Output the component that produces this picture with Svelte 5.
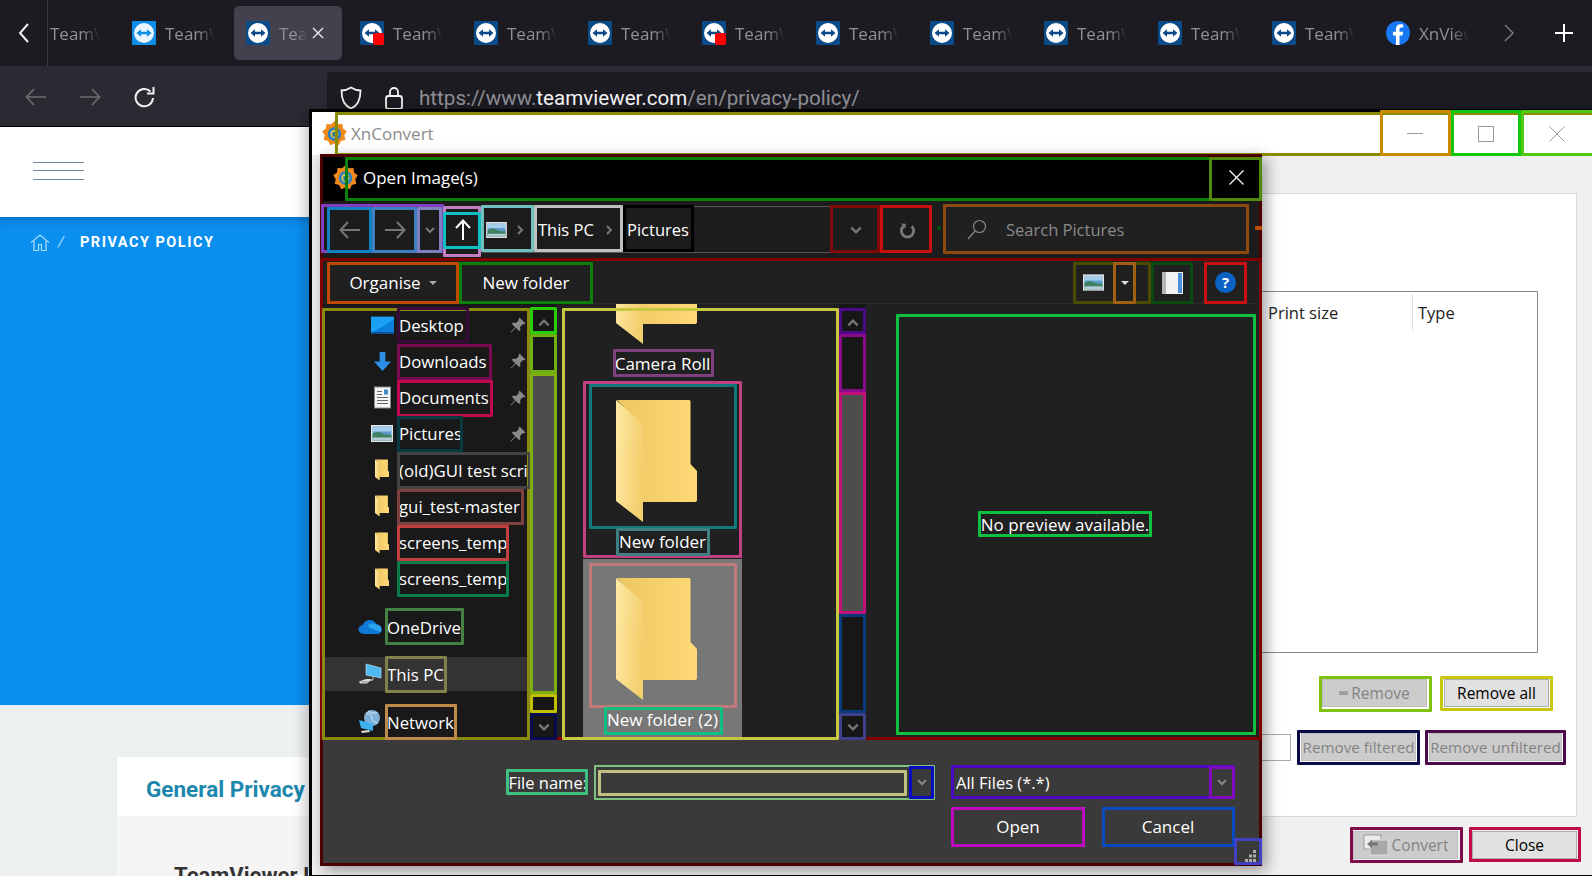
<script>
  const tabs = [
    { kind: 'light' },
    { kind: 'tv', active: true },
    { kind: 'tv', badge: true },
    { kind: 'tv' },
    { kind: 'tv' },
    { kind: 'tv', badge: true },
    { kind: 'tv' },
    { kind: 'tv' },
    { kind: 'tv' },
    { kind: 'tv' },
    { kind: 'tv' },
    { kind: 'fb', label: 'XnViewer' },
  ];

  const quick = [
    { icon: 'desktop', label: 'Desktop', pin: true },
    { icon: 'down', label: 'Downloads', pin: true },
    { icon: 'doc', label: 'Documents', pin: true },
    { icon: 'pic', label: 'Pictures', pin: true },
    { icon: 'folder', label: '(old)GUI test script' },
    { icon: 'folder', label: 'gui_test-master' },
    { icon: 'folder', label: 'screens_temp' },
    { icon: 'folder', label: 'screens_temp' },
  ];

  const files = [
    { label: 'Camera Roll' },
    { label: 'New folder' },
    { label: 'New folder (2)', selected: true },
  ];

  // detected-widget boxes drawn over the screenshot: x1, y1, x2, y2, colour, stroke
  const boxes = [
    [335, 112, 1600, 156, '#8a8a00'], [1380, 110, 1451, 156, '#c88a00'], [1451, 110, 1521, 156, '#10c810'], [1521, 110, 1600, 156, '#50c810'],
    [320, 154, 1262, 866, '#4a0000'], [320, 258, 1262, 740, '#800000'],
    [345, 157, 1262, 201, '#0a800a'], [1209, 157, 1262, 201, '#508a0a'],
    [321, 204, 444, 253, '#8040c0'], [327, 207, 372, 253, '#1080c0'], [372, 207, 417, 253, '#4080c0'], [417, 207, 442, 253, '#8080c0'],
    [443, 206, 481, 257, '#c080c0'], [443, 212, 481, 249, '#10c0c0'], [481, 205, 534, 252, '#70c0c0'], [534, 205, 623, 252, '#c0c0c0'], [623, 205, 694, 252, '#000000'],
    [830, 205, 880, 253, '#800a0a'], [880, 205, 932, 253, '#c81010'], [943, 204, 1249, 254, '#8a4a10'],
    [327, 262, 459, 304, '#c04a00'], [459, 262, 593, 304, '#0a800a'], [1073, 262, 1151, 304, '#4a4a00'], [1113, 262, 1136, 304, '#a06010'], [1151, 262, 1193, 304, '#0a4a10'], [1204, 262, 1247, 304, '#c81010'],
    [322, 308, 530, 740, '#8a8a10'],
    [397, 307, 469, 343, '#3a0a3a'], [397, 344, 492, 380, '#7a0a50'], [397, 380, 493, 417, '#c00a50'], [397, 416, 463, 452, '#0a3a40'], [397, 452, 531, 489, '#444444'],
    [397, 489, 524, 525, '#7f4040'], [397, 525, 509, 561, '#c04040'], [397, 561, 509, 597, '#0a7a4a'], [385, 608, 464, 645, '#458045'], [385, 656, 447, 693, '#80804a'], [385, 704, 457, 740, '#c08a4a'],
    [530, 307, 557, 334, '#2acc0a'], [530, 334, 557, 373, '#70b010'], [530, 373, 557, 694, '#80b010'], [530, 694, 557, 713, '#c0c000'], [530, 713, 557, 740, '#0a0a50'],
    [562, 308, 839, 740, '#c8c840'],
    [839, 308, 866, 334, '#4a0a8a'], [839, 334, 866, 392, '#8a0a8a'], [839, 392, 866, 614, '#c0107a'], [839, 614, 866, 713, '#0a3a7a'], [839, 713, 866, 740, '#40408a'],
    [613, 349, 714, 377, '#804080'], [583, 381, 742, 558, '#c04080'], [589, 384, 737, 529, '#107a7a'], [616, 528, 710, 556, '#408080'], [589, 563, 737, 708, '#c07a7a'], [604, 707, 723, 735, '#10c080'],
    [896, 314, 1256, 735, '#10c040'], [978, 511, 1152, 537, '#10c040'],
    [506, 769, 588, 795, '#40c080'], [594, 765, 935, 800, '#80c080', 2], [598, 770, 907, 796, '#c0c080'], [909, 766, 934, 799, '#0a0ac0'],
    [951, 765, 1235, 799, '#4a0ac0'], [1209, 766, 1235, 799, '#800ac0'], [951, 807, 1085, 847, '#c00ac0'], [1102, 807, 1235, 847, '#0a4ac0'], [1234, 838, 1262, 865, '#4040c0'],
    [1319, 676, 1432, 712, '#80c010'], [1440, 676, 1553, 711, '#c8c810'], [1297, 730, 1420, 765, '#0a0a4a'], [1425, 730, 1566, 765, '#4a0a4a'], [1350, 827, 1463, 863, '#800a4a'], [1469, 827, 1581, 862, '#c00a4a'],
    [1255, 226, 1262, 230, '#c04a00', 2], [937, 226, 941, 230, '#0a500a', 2],
  ];

  // star outline for the XnConvert flame
  const flame = Array.from({ length: 18 }, (_, i) => {
    const r = i % 2 ? 9.5 : 12;
    const a = (i / 18) * Math.PI * 2;
    return `${(12 + r * Math.sin(a)).toFixed(1)},${(12 - r * Math.cos(a)).toFixed(1)}`;
  }).join(' ');
</script>

{#snippet chevron(dir, color, size = 12)}
  <svg width={size} height={size} viewBox="0 0 12 12" class="ico">
    {#if dir === 'down'}
      <path d="M2 4l4 4 4-4" fill="none" stroke={color} stroke-width="2" />
    {:else if dir === 'up'}
      <path d="M2 8l4-4 4 4" fill="none" stroke={color} stroke-width="2" />
    {:else}
      <path d="M4 2l4 4-4 4" fill="none" stroke={color} stroke-width="2" />
    {/if}
  </svg>
{/snippet}

{#snippet tvIcon(kind, badge)}
  <svg width="24" height="24" viewBox="0 0 24 24" class="ico">
    <rect width="24" height="24" rx="1" fill={kind === 'light' ? '#0e8ee9' : '#0a4a86'} />
    <circle cx="12" cy="12" r="10" fill={kind === 'light' ? '#e8f4fd' : '#fff'} />
    <path d="M4.500 12l4.500-3.800v2.500h6V8.200l4.500 3.800-4.500 3.800v-2.500H9v2.500z" fill={kind === 'light' ? '#0e8ee9' : '#0a4a86'} />
    {#if badge}<rect x="13" y="12" width="11" height="12" rx="2" fill="#f00" />{/if}
  </svg>
{/snippet}

{#snippet flameIcon()}
  <svg width="25" height="25" viewBox="0 0 24 24" class="ico">
    <polygon points={flame} fill="#f08a1a" />
    <circle cx="12" cy="12.500" r="6.500" fill="#2b7fc4" />
    <circle cx="12" cy="12.500" r="3.800" fill="#e8d24a" />
    <path d="M10 10.500h5v1.800h-3v1h3v1.800h-5z" fill="#2c6f9f" />
  </svg>
{/snippet}

{#snippet landscape(w, h)}
  <svg width={w} height={h} viewBox="0 0 22 17" class="ico">
    <rect width="22" height="17" fill="#e6e6e6" />
    <rect x="1.500" y="1.500" width="19" height="14" fill="#5b9bd0" />
    <rect x="1.500" y="1.500" width="19" height="5" fill="#a5cdea" />
    <path d="M1.500 9q5-3.500 9-1t10 1.500v6h-19z" fill="#3f8060" />
    <rect x="1.500" y="12.500" width="19" height="3" fill="#b5cbd6" />
  </svg>
{/snippet}

{#snippet folderIcon(w, h)}
  <svg width={w} height={h} viewBox="0 0 81 122" class="ico">
    <defs>
      <linearGradient id="fb" x1="0" x2="1" y1="0" y2="0">
        <stop offset="0" stop-color="#eec660" />
        <stop offset="1" stop-color="#ffd977" />
      </linearGradient>
      <linearGradient id="ff" x1="0" x2="1" y1="0" y2="0.200">
        <stop offset="0" stop-color="#ffe9a4" />
        <stop offset="1" stop-color="#f3cf6e" />
      </linearGradient>
    </defs>
    <path d="M1 0H73q1.500 0 1.500 1.500V64L81 71V100q0 2-2 2H24V24z" fill="url(#fb)" />
    <path d="M0 0L27 24V122L0 101z" fill="url(#ff)" />
  </svg>
{/snippet}

{#snippet treeIcon(name)}
  {#if name === 'desktop'}
    <svg width="23" height="18" viewBox="0 0 22 16" class="ico">
      <rect width="22" height="16" fill="#19a0f5" />
      <path d="M0 16L22 3v13z" fill="#0c7fdc" />
      <rect y="14.800" width="22" height="1.200" fill="#0a4f96" />
    </svg>
  {:else if name === 'down'}
    <svg width="19" height="21" viewBox="0 0 20 20" class="ico">
      <path d="M7 0h6v10h6L10 20 1 10h6z" fill="#2e8fe6" />
    </svg>
  {:else if name === 'doc'}
    <svg width="17" height="23" viewBox="0 0 17 22" class="ico">
      <rect x="0.500" y="0.500" width="16" height="21" fill="#f5f5f5" stroke="#8a8a8a" />
      <path d="M3 5h5M3 8h5M3 11h11M3 14h11M3 17h11" stroke="#666" />
      <rect x="10" y="3" width="4" height="5" fill="#3a8ccc" />
    </svg>
  {:else if name === 'pic'}
    {@render landscape(22, 17)}
  {:else}
    {@render folderIcon(14, 22)}
  {/if}
{/snippet}

{#snippet scrollbar(topH, thumbH, bottomH)}
  <div class="sbar">
    <div class="sbtn first">{@render chevron('up', '#777', 14)}</div>
    <div style="height: {topH}px"></div>
    <div class="sthumb" style="height: {thumbH}px"></div>
    <div style="height: {bottomH}px"></div>
    <div class="sbtn">{@render chevron('down', '#777', 14)}</div>
  </div>
{/snippet}

<div class="screen">
  <header class="tabbar">
    <div class="tab-back">
      <svg width="12" height="24" viewBox="0 0 12 24"><path d="M10 3L2 12l8 9" fill="none" stroke="#eee" stroke-width="2" /></svg>
    </div>
    <div class="tab-partial"><span class="tab-text">TeamViewer</span></div>
    {#each tabs as tab}
      <div class="tab" class:active={tab.active}>
        {#if tab.kind === 'fb'}
          <svg width="24" height="24" viewBox="0 0 24 24" class="ico">
            <circle cx="12" cy="12" r="12" fill="#1877f2" />
            <path d="M13.500 24V14.500h3l.6-3.700h-3.600V8.500c0-1.100.5-1.900 2-1.900h1.700V3.400c-.8-.1-1.700-.2-2.600-.2-2.900 0-4.700 1.700-4.700 4.800v2.800H7v3.700h2.900V24z" fill="#fff" />
          </svg>
        {:else}
          {@render tvIcon(tab.kind, tab.badge)}
        {/if}
        <span class="tab-text">{tab.label ?? 'TeamViewer'}</span>
        {#if tab.active}
          <svg width="12" height="12" viewBox="0 0 12 12" class="tab-x"><path d="M1 1l10 10M11 1L1 11" stroke="#eee" stroke-width="1.300" /></svg>
        {/if}
      </div>
    {/each}
    <div class="tab-end">
      <svg width="12" height="18" viewBox="0 0 12 18"><path d="M2 1l8 8-8 8" fill="none" stroke="#777" stroke-width="1.500" /></svg>
      <svg width="18" height="18" viewBox="0 0 18 18"><path d="M9 0v18M0 9h18" stroke="#fff" stroke-width="2" /></svg>
    </div>
  </header>

  <div class="toolbar">
    <svg width="22" height="18" viewBox="0 0 22 18"><path d="M21 9H2M9 1L1.500 9 9 17" fill="none" stroke="#6c6c70" stroke-width="1.700" /></svg>
    <svg width="22" height="18" viewBox="0 0 22 18"><path d="M1 9h19M13 1l7.500 8-7.500 8" fill="none" stroke="#6c6c70" stroke-width="1.700" /></svg>
    <svg width="22" height="22" viewBox="0 0 22 22"><path d="M17.500 5.500A8.700 8.700 0 1 0 20 12" fill="none" stroke="#f2f2f2" stroke-width="2" /><path d="M20.500 1v6.500H14" fill="none" stroke="#f2f2f2" stroke-width="2" /></svg>
    <div class="urlbar">
      <svg width="22" height="24" viewBox="0 0 22 24"><path d="M11 1.500c3 2 6 3 9.500 3C20.500 14 17 20 11 22.500 5 20 1.500 14 1.500 4.500c3.500 0 6.500-1 9.500-3z" fill="none" stroke="#f2f2f2" stroke-width="1.800" /></svg>
      <svg width="18" height="24" viewBox="0 0 18 24"><rect x="1" y="10" width="16" height="13" rx="2.500" fill="none" stroke="#f2f2f2" stroke-width="1.800" /><path d="M5 10V6a4 4 0 0 1 8 0v4" fill="none" stroke="#f2f2f2" stroke-width="1.800" /></svg>
      <span class="url">https://www.<b>teamviewer.com</b>/en/privacy-policy/</span>
    </div>
  </div>

  <main class="page">
    <div class="site-nav">
      <div class="burger"><i></i><i></i><i></i></div>
    </div>
    <div class="hero">
      <div class="crumbs">
        <svg width="20" height="17" viewBox="0 0 20 17"><path d="M1 8.500L10 1l9 7.500M4 7v9.500h4.500v-6h3v6H16V7" fill="none" stroke="#a9dbff" stroke-width="1.200" /></svg>
        <span class="slash">/</span>
        <span class="crumb">PRIVACY POLICY</span>
      </div>
    </div>
    <div class="article">
      <div class="article-tab">General Privacy Policy</div>
      <div class="article-body"><h2>TeamViewer Inc</h2></div>
    </div>
  </main>

  <section class="xn">
    <div class="xn-title">
      {@render flameIcon()}
      <span>XnConvert</span>
      <div class="xn-ctrls">
        <div><svg width="16" height="2"><rect width="16" height="1" fill="#999" /></svg></div>
        <div><svg width="16" height="16"><rect x="0.500" y="0.500" width="15" height="15" fill="none" stroke="#999" /></svg></div>
        <div><svg width="16" height="16"><path d="M.5 .5l15 15M15.500 .5l-15 15" stroke="#999" /></svg></div>
      </div>
    </div>
    <div class="xn-body">
      <div class="xn-panel">
        <div class="table">
          <div class="thead">
            <span class="th-print">Print size</span>
            <span class="th-type">Type</span>
          </div>
        </div>
        <div class="btn-row one">
          <button class="btn off"><span class="minus"></span> Remove</button>
          <button class="btn">Remove all</button>
        </div>
        <div class="btn-row two">
          <div class="mini-input"></div>
          <button class="btn off w115">Remove filtered</button>
          <button class="btn off w133">Remove unfiltered</button>
        </div>
      </div>
      <div class="xn-foot">
        <button class="btn off">
          <svg width="26" height="22" viewBox="0 0 26 22" class="ico">
            <rect x="1" y="1" width="17" height="14" fill="#eee" stroke="#999" />
            <rect x="7" y="6" width="18" height="15" fill="#a9a9a9" stroke="#ddd" />
            <path d="M4 10l5-4v2.500h6v3H9V14z" fill="#777" />
          </svg>
          Convert
        </button>
        <button class="btn">Close</button>
      </div>
    </div>

    <div class="dialog">
      <div class="dlg-title">
        {@render flameIcon()}
        <span>Open Image(s)</span>
        <svg class="dlg-x" width="15" height="15" viewBox="0 0 15 15"><path d="M.5 .5l14 14M14.500 .5l-14 14" stroke="#fff" stroke-width="1.200" /></svg>
      </div>

      <div class="dlg-nav">
        <div class="navbtn w45"><svg width="22" height="18" viewBox="0 0 22 18"><path d="M21 9H2M9 1L1.500 9 9 17" fill="none" stroke="#777" stroke-width="2" /></svg></div>
        <div class="navbtn w45"><svg width="22" height="18" viewBox="0 0 22 18"><path d="M1 9h19M13 1l7.500 8-7.500 8" fill="none" stroke="#777" stroke-width="2" /></svg></div>
        <div class="navbtn w25">{@render chevron('down', '#777')}</div>
        <div class="navbtn w38"><svg width="16" height="22" viewBox="0 0 16 22"><path d="M8 21V2M1 9l7-7.500L15 9" fill="none" stroke="#fff" stroke-width="2" /></svg></div>
        <div class="crumbbar">
          <div class="crumbpart first">{@render landscape(21, 16)} {@render chevron('right', '#777', 12)}</div>
          <div class="crumbpart pc">This PC {@render chevron('right', '#777', 12)}</div>
          <div class="crumbpart">Pictures</div>
        </div>
        <div class="navbtn w50">{@render chevron('down', '#777', 14)}</div>
        <div class="navbtn w52"><svg width="17" height="18" viewBox="0 0 20 22"><path d="M15 6.500A7.500 7.500 0 1 1 5 6.500" fill="none" stroke="#777" stroke-width="3.500" /><path d="M2 3l6 .5-.5 6z" fill="#777" /></svg></div>
        <div class="searchbox">
          <svg width="20" height="21" viewBox="0 0 20 21" class="ico"><circle cx="12.500" cy="7.500" r="6" fill="none" stroke="#888" stroke-width="1.200" /><path d="M8 12L1 20" stroke="#888" stroke-width="1.200" /></svg>
          <span>Search Pictures</span>
        </div>
      </div>

      <div class="dlg-tools">
        <div class="tool w132">Organise <span class="caret"></span></div>
        <div class="tool w134">New folder</div>
        <div class="tools-right">
          <div class="tool w40">{@render landscape(21, 17)}</div>
          <div class="tool w23"><span class="caret white"></span></div>
          <div class="tool w42 ml15">
            <svg width="21" height="22" viewBox="0 0 21 22"><rect width="21" height="22" fill="#f2f2f2" /><rect x="16" y="1" width="4" height="20" fill="#4a90d9" /><rect x="0" y="0" width="4" height="22" fill="#b5b5b5" /></svg>
          </div>
          <div class="tool w43 ml11">
            <span class="helpdot">?</span>
          </div>
        </div>
      </div>

      <div class="dlg-main">
        <div class="tree">
          {#each quick as row}
            <div class="qrow">
              <div class="qicon">{@render treeIcon(row.icon)}</div>
              <span class="qlabel">{row.label}</span>
              {#if row.pin}
                <svg class="pin" width="16" height="16" viewBox="0 0 16 16"><path d="M9.500 .5L15.500 6.500 14 7.500 13 7 10 10 10.500 13 9 14 5.800 10.800 1 15.500 .5 15 5.200 10.200 2 7 3 5.500 6 6 9 3 8.500 2z" fill="#8a8a8a" /></svg>
              {/if}
            </div>
          {/each}
          <div class="rrow onedrive">
            <svg width="24" height="17" viewBox="0 0 24 17" class="ico">
              <path d="M6 15q-5.500-.5-5.500-4.500 0-3.500 4-4.500Q7 1 12 1q4.500 0 6.500 4.500 5 .5 5 5 0 4.500-4.500 4.500z" fill="#0f78d4" />
              <path d="M10 6q4-2.500 8.500-.5 5 .5 5 5 0 1.500-.7 2.500L12 9z" fill="#2aa4ec" />
            </svg>
            <span>OneDrive</span>
          </div>
          <div class="rrow thispc">
            <svg width="24" height="22" viewBox="0 0 24 22" class="ico">
              <path d="M8 1l15 4v10L8 12z" fill="#4fb9f2" stroke="#cfe9f8" stroke-width=".6" />
              <path d="M15 14v3l-4 .5" fill="none" stroke="#bbb" />
              <path d="M1 18.500l7-2.500h6l-5 4.500H2z" fill="#d8d8d8" />
              <path d="M3 18.500h7M4 19.700h5" stroke="#999" stroke-width=".6" />
            </svg>
            <span>This PC</span>
          </div>
          <div class="rrow network">
            <svg width="24" height="24" viewBox="0 0 24 24" class="ico">
              <circle cx="14" cy="8" r="8" fill="#7fb1d8" />
              <path d="M8 3q6 1 6 5t6 5M10 1q3 3 9 2" fill="none" stroke="#cfe3f2" />
              <path d="M1 10l14 4v7L3 18z" fill="#3fb0ee" />
              <path d="M3 21l8-1 1 2-8 1z" fill="#ddd" />
            </svg>
            <span>Network</span>
          </div>
        </div>
        {@render scrollbar(39, 321, 19)}

        <div class="filelist">
          <div class="filescroll">
            {#each files as f}
              <div class="fileitem" class:sel={f.selected}>
                <div class="fileicon">{@render folderIcon(81, 122)}</div>
                <span class="filelabel">{f.label}</span>
              </div>
            {/each}
          </div>
        </div>
        {@render scrollbar(58, 222, 99)}

        <div class="preview">No preview available.</div>
      </div>

      <div class="dlg-foot">
        <div class="foot-row">
          <label for="fname">File name:</label>
          <div class="combo wide">
            <input id="fname" />
            <div class="combo-drop">{@render chevron('down', '#888', 12)}</div>
          </div>
          <div class="combo filter">
            <span>All Files (*.*)</span>
            <div class="combo-drop">{@render chevron('down', '#888', 12)}</div>
          </div>
        </div>
        <div class="foot-row second">
          <button class="dbtn primary">Open</button>
          <button class="dbtn">Cancel</button>
        </div>
        <svg class="grip" width="12" height="12" viewBox="0 0 12 12">
          <path d="M8 0h3v3H8zM8 4.500h3v3H8zM4 4.500h3v3H4zM8 9h3v3H8zM4 9h3v3H4zM0 9h3v3H0z" fill="#aaa" />
        </svg>
      </div>
    </div>
  </section>

  {#each boxes as [x1, y1, x2, y2, color, sw]}
    <div class="box" style="left: {x1}px; top: {y1}px; width: {x2 - x1}px; height: {y2 - y1}px; border-color: {color}; border-width: {sw ?? 3}px"></div>
  {/each}
</div>

<style>
  :global(body) {
    margin: 0;
    overflow: hidden;
    background: #fff;
  }
  .screen {
    position: relative;
    width: 1592px;
    height: 876px;
    overflow: hidden;
    font-family: "Open Sans", "Noto Sans", sans-serif;
    font-size: 16px;
  }
  .ico { display: block; flex: none; }
  .box {
    position: absolute;
    box-sizing: border-box;
    border-style: solid;
    border-radius: 1px;
    pointer-events: none;
  }

  /* browser chrome */
  .tabbar {
    display: flex;
    height: 66px;
    background: #1c1b22;
  }
  .tab-back {
    width: 47px;
    border-right: 1px solid #3a3a42;
    display: flex;
    align-items: center;
    justify-content: center;
    flex: none;
  }
  .tab-partial {
    width: 70px;
    padding-left: 2px;
    flex: none;
    display: flex;
    align-items: center;
  }
  .tab {
    box-sizing: border-box;
    width: 108px;
    height: 54px;
    margin: 6px 6px 0 0;
    padding-left: 12px;
    display: flex;
    align-items: center;
    gap: 9px;
    flex: none;
    position: relative;
    border-radius: 5px;
  }
  .tab.active { background: #42414d; }
  .tab-text {
    display: block;
    width: 50px;
    overflow: hidden;
    white-space: nowrap;
    color: #909096;
    font-size: 17px;
    -webkit-mask-image: linear-gradient(to right, #000 65%, transparent 100%);
    mask-image: linear-gradient(to right, #000 65%, transparent 100%);
  }
  .tab.active .tab-text { width: 28px; }
  .tab-x { position: absolute; left: 78px; top: 21px; }
  .tab-end {
    display: flex;
    align-items: center;
    margin-left: auto;
    gap: 40px;
    padding-right: 19px;
  }
  .toolbar {
    height: 61px;
    box-sizing: border-box;
    background: #2b2a33;
    border-bottom: 1px solid #000;
    display: flex;
    align-items: center;
    padding-left: 25px;
    gap: 32px;
  }
  .toolbar > svg { margin-top: 2px; }
  .urlbar {
    flex: 1;
    align-self: flex-end;
    height: 54px;
    margin-left: 140px;
    background: #1c1b22;
    border-radius: 4px 0 0 0;
    display: flex;
    align-items: center;
    padding: 0 0 2px 13px;
    box-sizing: border-box;
    gap: 23px;
    color: #8f8f94;
  }
  .urlbar svg { flex: none; }
  .url {
    font-size: 20.600px;
    margin-left: -7px;
    white-space: nowrap;
    font-family: Roboto, sans-serif;
  }
  .url b { color: #f4f4f4; font-weight: 400; }

  /* web page behind the window */
  .page {
    height: 749px;
    overflow: hidden;
    background: #edf0f1;
    font-family: Roboto, sans-serif;
  }
  .site-nav {
    height: 90px;
    background: #fff;
    display: flex;
    align-items: center;
    padding: 0 0 3px 33px;
    box-sizing: border-box;
  }
  .burger {
    width: 51px;
    display: flex;
    flex-direction: column;
    gap: 7.500px;
  }
  .burger i {
    display: block;
    height: 1px;
    background: #6d87a3;
  }
  .hero {
    height: 488px;
    background: #0a8fef;
    box-shadow: inset 0 8px 8px -6px rgba(0, 60, 120, 0.45);
    box-sizing: border-box;
    padding: 16px 0 0 30px;
  }
  .crumbs {
    display: flex;
    align-items: center;
    color: #fff;
  }
  .slash { margin: 0 16px 0 8px; color: #a9dbff; font-size: 15px; font-style: italic; }
  .crumb {
    font-size: 14.500px;
    font-weight: 700;
    letter-spacing: 1.500px;
  }
  .article { margin: 52px 0 0 117px; }
  .article-tab {
    height: 59px;
    box-sizing: border-box;
    background: #fff;
    padding: 16px 0 0 29px;
    color: #1b87ad;
    font-size: 22.500px;
    font-weight: 700;
    white-space: nowrap;
    line-height: 32px;
  }
  .article-body {
    background: #f5f5f5;
    height: 200px;
    padding: 47px 0 0 57px;
  }
  h2 {
    margin: 0;
    font-size: 22px;
    line-height: 26px;
    color: #333;
    white-space: nowrap;
  }

  /* XnConvert window */
  .xn {
    position: absolute;
    left: 309px;
    top: 109px;
    width: 1283px;
    height: 767px;
    box-sizing: border-box;
    border-top: 3px solid #000;
    border-left: 3px solid #000;
    border-bottom: 1px solid #000;
    background: #f0f0f0;
    box-shadow: -6px 0 10px rgba(0, 0, 0, 0.18);
  }
  .xn-title {
    height: 43px;
    background: #fff;
    display: flex;
    align-items: center;
    padding-left: 10px;
    gap: 4px;
    color: #8b8b8b;
    font-size: 17px;
  }
  .xn-ctrls {
    margin-left: auto;
    display: flex;
    height: 100%;
  }
  .xn-ctrls div {
    width: 71px;
    display: flex;
    align-items: center;
    justify-content: center;
  }
  .xn-body {
    height: 720px;
    padding: 38px 15px 0 10px;
    box-sizing: border-box;
  }
  .xn-panel {
    height: 624px;
    box-sizing: border-box;
    background: #fff;
    border: 1px solid #d9d9d9;
    padding-top: 97px;
    display: flex;
    flex-direction: column;
  }
  .table {
    height: 362px;
    box-sizing: border-box;
    margin: 0 38px 0 0;
    border: 1px solid #888;
    background: #fff;
  }
  .thead {
    display: grid;
    grid-template-columns: 1fr 149px 125px;
    height: 40px;
    align-items: center;
    color: #222;
    font-size: 16.500px;
  }
  .th-print { grid-column: 2; padding-left: 5px; }
  .th-type {
    grid-column: 3;
    border-left: 1px solid #ddd;
    padding-left: 5px;
    line-height: 37px;
  }
  .btn-row {
    display: flex;
    justify-content: flex-end;
    align-items: center;
  }
  .btn-row.one { margin: 26px 27px 0 0; gap: 17px; }
  .btn-row.two { margin: 26px 14px 0 0; gap: 13px; }
  .mini-input {
    width: 40px;
    height: 27px;
    border: 1px solid #aaa;
    box-sizing: border-box;
    margin-right: -3px;
  }
  .btn {
    box-sizing: border-box;
    width: 105px;
    height: 28px;
    padding: 0;
    border: 1px solid #adadad;
    background: #e1e1e1;
    color: #000;
    font: 15.500px "Open Sans", sans-serif;
    display: flex;
    align-items: center;
    justify-content: center;
    gap: 3px;
    white-space: nowrap;
  }
  .btn.off { background: #cccccc; border-color: #bfbfbf; color: #838383; }
  .btn.w115 { width: 115px; font-size: 15.200px; }
  .btn.w133 { width: 133px; font-size: 15.200px; }
  .minus { width: 9px; height: 4px; background: #a0a0a0; }
  .xn-foot {
    display: flex;
    justify-content: flex-end;
    gap: 14px;
    margin-top: 14px;
  }

  /* Open Image(s) dialog */
  .dialog {
    position: absolute;
    left: 8px;
    top: 42px;
    width: 942px;
    height: 712px;
    display: flex;
    flex-direction: column;
    background: #202020;
    color: #fff;
    box-shadow: 4px 4px 14px rgba(0, 0, 0, 0.4);
  }
  .dlg-title {
    height: 47px;
    flex: none;
    box-sizing: border-box;
    background: #000;
    display: flex;
    align-items: center;
    padding-left: 13px;
    gap: 5px;
    font-size: 17px;
    position: relative;
  }
  .dlg-x { position: absolute; right: 18px; top: 16px; }
  .dlg-nav {
    height: 57px;
    flex: none;
    background: #1c1c1c;
    display: flex;
    align-items: center;
    padding-left: 7px;
  }
  .navbtn {
    height: 47px;
    display: flex;
    align-items: center;
    justify-content: center;
    flex: none;
  }
  .w45 { width: 45px; }
  .w25 { width: 26px; }
  .w38 { width: 38px; margin-left: 1px; }
  .w50 { width: 50px; }
  .w52 { width: 52px; }
  .crumbbar {
    width: 349px;
    height: 47px;
    box-sizing: border-box;
    border: 1px solid #555;
    display: flex;
    align-items: center;
    flex: none;
    font-size: 16.500px;
  }
  .crumbpart {
    display: flex;
    align-items: center;
    height: 100%;
    gap: 9px;
    white-space: nowrap;
  }
  .crumbpart.first { width: 53px; box-sizing: border-box; padding-left: 3px; gap: 7px; }
  .crumbpart.pc { width: 89px; box-sizing: border-box; padding-left: 2px; }
  .crumbpart:last-child { padding-left: 2px; }
  .searchbox {
    margin-left: 11px;
    width: 306px;
    height: 50px;
    box-sizing: border-box;
    background: #202020;
    display: flex;
    align-items: center;
    gap: 19px;
    padding-left: 23px;
    color: #8a8a8a;
    font-size: 16.500px;
  }
  .dlg-tools {
    height: 46px;
    flex: none;
    box-sizing: border-box;
    background: #202020;
    border-bottom: 1px solid #2c2c2c;
    display: flex;
    padding: 4px 15px 0 7px;
    font-size: 17px;
  }
  .tool {
    height: 41px;
    display: flex;
    align-items: center;
    justify-content: center;
    flex: none;
    gap: 8px;
  }
  .w132 { width: 132px; }
  .w134 { width: 134px; }
  .w40 { width: 40px; }
  .w23 { width: 23px; }
  .w42 { width: 42px; }
  .w43 { width: 43px; }
  .ml15 { margin-left: 15px; }
  .ml11 { margin-left: 11px; }
  .tools-right { margin-left: auto; display: flex; }
  .caret {
    width: 0;
    height: 0;
    border-left: 4px solid transparent;
    border-right: 4px solid transparent;
    border-top: 4px solid #aaa;
  }
  .caret.white { border-top-color: #ddd; }
  .helpdot {
    width: 21px;
    height: 21px;
    border-radius: 50%;
    background: #0a62c4;
    color: #fff;
    font-size: 15px;
    font-weight: 700;
    line-height: 21px;
    text-align: center;
  }
  .dlg-main {
    height: 436px;
    flex: none;
    display: flex;
    overflow: hidden;
  }
  .tree {
    width: 210px;
    flex: none;
    background: #191919;
    padding-top: 3px;
    box-sizing: border-box;
    overflow: hidden;
    font-size: 16.800px;
  }
  .qrow {
    height: 36.250px;
    display: flex;
    align-items: center;
    position: relative;
    white-space: nowrap;
  }
  .qicon {
    width: 78px;
    flex: none;
    display: flex;
    box-sizing: border-box;
    padding-left: 46px;
    justify-content: center;
  }
  .qlabel { margin-left: 1px; }
  .pin { position: absolute; left: 190px; top: 10px; }
  .rrow {
    display: flex;
    align-items: center;
    gap: 5px;
    padding-left: 38px;
    height: 36px;
  }
  .onedrive { margin-top: 12px; }
  .thispc { margin-top: 12px; height: 34px; background: #333; }
  .network { margin-top: 13px; }
  .sbar {
    width: 27px;
    flex: none;
    background: #171717;
  }
  .sbar > div { box-sizing: border-box; }
  .sbtn {
    height: 27px;
    display: flex;
    align-items: center;
    justify-content: center;
  }
  .sbar > .sbtn.first { height: 30px; padding-top: 7px; }
  .sthumb { background: #4d4d4d; }
  .filelist {
    width: 277px;
    margin-left: 5px;
    flex: none;
    overflow: hidden;
    background: #202020;
    padding-left: 21px;
    box-sizing: border-box;
  }
  .filescroll { margin-top: -101px; }
  .fileitem {
    width: 159px;
    height: 178px;
    display: flex;
    flex-direction: column;
    align-items: center;
    font-size: 17px;
  }
  .fileitem.sel { background: #777; height: 180px; }
  .fileicon {
    height: 145px;
    margin: 3px 13px 0 0;
    padding-top: 8px;
    box-sizing: border-box;
    display: flex;
    align-items: center;
    flex: none;
  }
  .filelabel { line-height: 26px; }
  .preview {
    width: 360px;
    margin: 10px 0 5px 30px;
    flex: none;
    display: flex;
    align-items: center;
    justify-content: center;
    padding-right: 22px;
    font-size: 17px;
    box-sizing: border-box;
  }
  .dlg-foot {
    flex: 1;
    background: #3a3a3a;
    padding: 25px 27px 0 0;
    position: relative;
    font-size: 16.500px;
  }
  .foot-row {
    display: flex;
    justify-content: flex-end;
    align-items: center;
  }
  .foot-row label { margin-right: 7px; }
  .foot-row.second { margin-top: 8px; gap: 17px; }
  .combo {
    height: 34px;
    display: flex;
    align-items: center;
    box-sizing: border-box;
  }
  .combo.wide { width: 341px; }
  .combo.filter { width: 284px; margin-left: 16px; padding-left: 5px; justify-content: space-between; }
  .combo input {
    flex: 1;
    min-width: 0;
    background: none;
    border: none;
    outline: none;
    color: #fff;
  }
  .combo-drop {
    width: 26px;
    display: flex;
    justify-content: center;
  }
  .dbtn {
    box-sizing: border-box;
    width: 133px;
    height: 40px;
    background: #3a3a3a;
    color: #fff;
    padding: 0;
    border: none;
    border-right: 1px solid #8a8a8a;
    border-bottom: 1px solid #8a8a8a;
    font: 17px "Open Sans", sans-serif;
  }
  .dbtn.primary { border-color: #fff; }
  .grip { position: absolute; right: 5px; bottom: 4px; }
</style>
